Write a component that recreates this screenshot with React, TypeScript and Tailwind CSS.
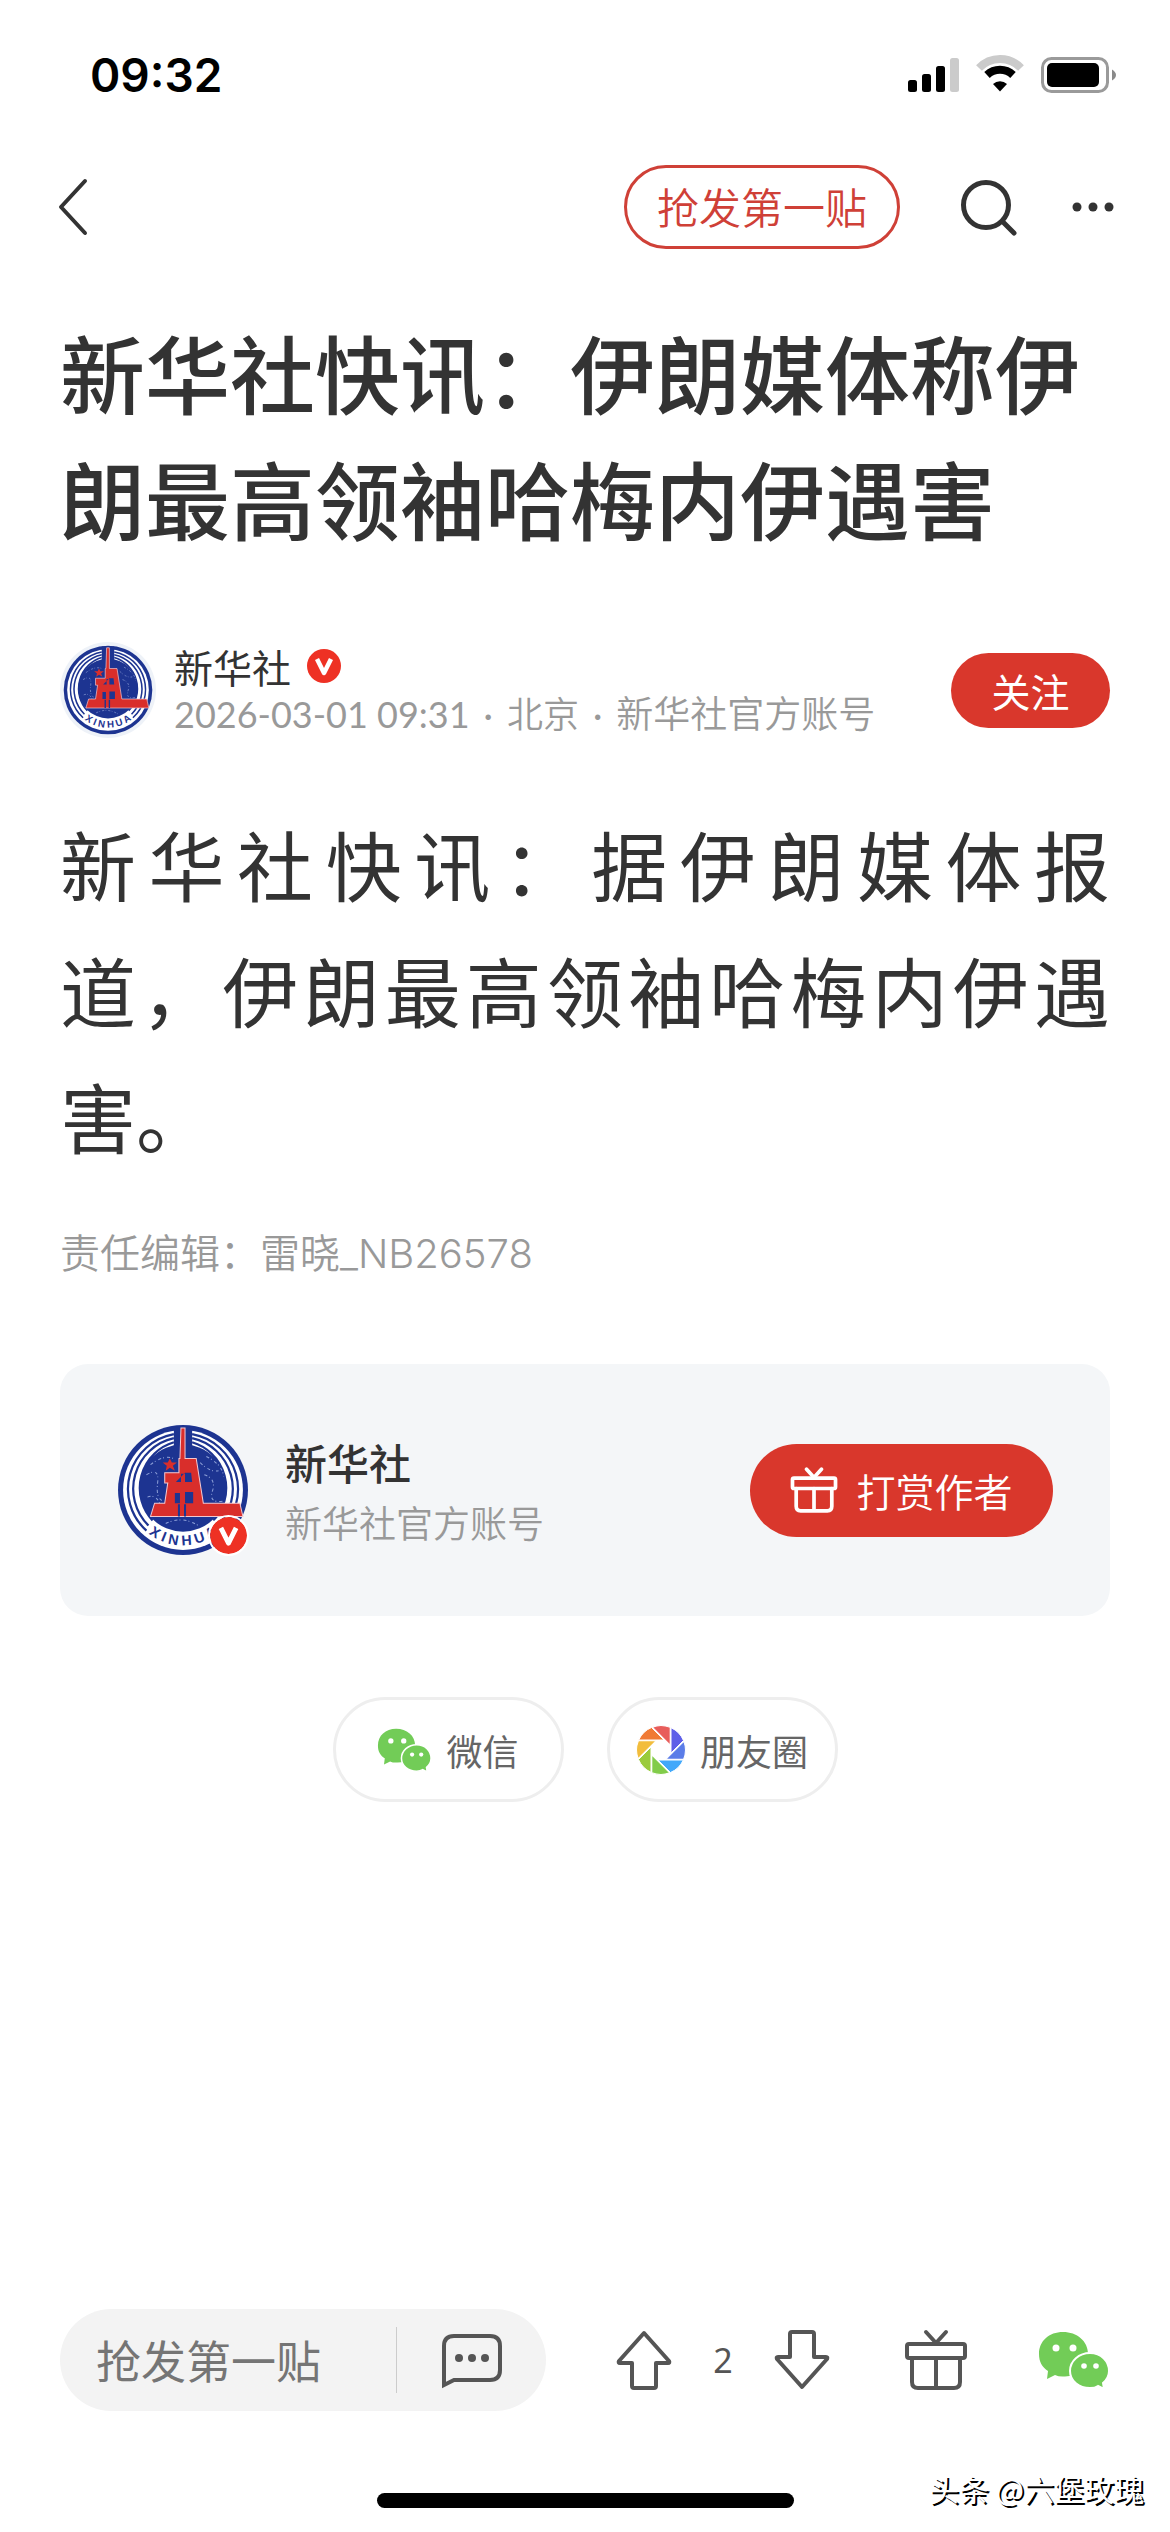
import type { ReactNode } from 'react';

const blades = ['#f07a35', '#e85d5b', '#5f5fe8', '#5b7de8', '#42a8fa', '#82cc4a', '#9bcb3c', '#f2bd3c'];

function StatusIcons() {
  return (
    <svg className="h-[40px] w-[210px]" viewBox="0 0 210 40" aria-hidden="true">
      <rect x="2" y="25" width="9" height="12" rx="2.5" />
      <rect x="16" y="19" width="9" height="18" rx="2.5" />
      <rect x="30" y="11" width="9" height="26" rx="2.5" />
      <rect x="44" y="3" width="9" height="34" rx="2.5" fill="#cbcbcb" />
      <path d="M73 13A29 29 0 0 1 115 13" fill="none" stroke="#cbcbcb" strokeWidth="8" />
      <path d="M81 20A19 19 0 0 1 107 20" fill="none" stroke="#000" strokeWidth="8" />
      <path d="M87 29A10.500 10.500 0 0 1 101 29L94 36.500Z" />
      <rect x="136.500" y="3.500" width="65" height="33" rx="9" fill="none" stroke="#9a9a9a" strokeWidth="3" />
      <rect x="141" y="8" width="52" height="24" rx="5" />
      <path d="M206 14.500Q210 17 210 20T206 25.500Z" fill="#8a8a8a" />
    </svg>
  );
}

function XinhuaLogo({ className, idPrefix }: { className: string; idPrefix: string }) {
  const arc = `${idPrefix}-arc`;
  return (
    <svg className={className} viewBox="0 0 130 130" role="img" aria-label="新华社">
      <circle cx="65" cy="65" r="64" fill="#1d3491" />
      <circle cx="65" cy="65" r="59" fill="#fff" />
      <g fill="none" stroke="#1d3491" strokeWidth="2.200">
        <path d="M29 105A55 55 0 0 1 56 10M74 10A55 55 0 0 1 101 105" />
        <path d="M31 100A51 51 0 0 1 56 14M74 14A51 51 0 0 1 99 100" />
        <path d="M35 95A47 47 0 0 1 56 18M74 18A47 47 0 0 1 95 95" />
      </g>
      <path d="M56 2H74V24H56Z" fill="#1d3491" />
      <circle cx="65" cy="63" r="43" fill="#1d3491" />
      <g fill="none" stroke="#8ea0d8" strokeWidth="1" strokeDasharray="3 2 1 3">
        <path d="M29 50Q42 42 40 58T46 76M33 40Q46 30 56 34M88 32Q104 40 105 52M86 50Q98 54 94 66T104 76" />
        <path d="M48 98Q64 90 80 100M82 38Q92 48 100 46M30 72Q40 68 44 84" />
      </g>
      <path
        d="M63 4H67V34H78L85 78H121L124 91H33L37 78H47L50 58H47V48H61V34H62Z"
        fill="#d92e2b"
        stroke="#f3c7cf"
        strokeWidth="1"
      />
      <path d="M52 34L54 38H59L55 41L57 46L52 43L48 46L49 41L45 38H50Z" fill="#d92e2b" />
      <path d="M58 57H63V49H67V57H74L73 48H67M57 68H62V78H57ZM67 67H75V78H67ZM60 79H62V91H60ZM66 79H68V91H66Z" fill="#1d3491" />
      <path id={arc} d="M23 100A55 55 0 0 0 107 100" fill="none" />
      <text className="font-['Liberation_Sans'] font-bold" fontSize="14" fill="#1d3491" textAnchor="middle">
        <textPath href={`#${arc}`} startOffset="50%">X I N H U A</textPath>
      </text>
    </svg>
  );
}

function VerifiedBadge({ className }: { className: string }) {
  return (
    <svg className={className} viewBox="0 0 34 34" aria-hidden="true">
      <circle cx="17" cy="17" r="17" fill="#ee3124" />
      <path d="M10 10L17 24L24 10" fill="none" stroke="#fff" strokeWidth="4.500" strokeLinejoin="round" />
    </svg>
  );
}

function GiftIcon({ className, strokeWidth }: { className: string; strokeWidth: number }) {
  return (
    <svg
      className={className}
      viewBox="0 0 64 62"
      fill="none"
      stroke="currentColor"
      strokeWidth={strokeWidth}
      strokeLinecap="round"
      strokeLinejoin="round"
      aria-hidden="true"
    >
      <rect x="3" y="15" width="58" height="14" rx="2" />
      <path d="M8 29V53Q8 59 14 59H50Q56 59 56 53V29M32 29V59M22 3L32 14L42 3" />
    </svg>
  );
}

function WechatIcon({ className }: { className: string }) {
  return (
    <svg className={className} viewBox="0 0 72 58" aria-hidden="true">
      <path d="M25 1C11 1 1 10 1 23C1 31 4 36 10 40L9 48L17 44Q21 46 27 45.500C40 45 50 36 50 23C50 10 39 1 25 1Z" fill="#72cc57" />
      <path
        d="M52 22C41 22 32 30 32 40C32 50 41 57 52 57Q57 57 60 55L66 58L65 52Q71 47 71 40C71 30 63 22 52 22Z"
        fill="#72cc57"
        stroke="#fff"
        strokeWidth="2"
      />
      <g fill="#fff">
        <circle cx="18" cy="17" r="3.500" />
        <circle cx="35" cy="17" r="3.500" />
        <circle cx="46" cy="35" r="2.800" />
        <circle cx="58" cy="35" r="2.800" />
      </g>
    </svg>
  );
}

function MomentsIcon() {
  return (
    <svg className="size-[50px]" viewBox="-25 -25 50 50" aria-hidden="true">
      {blades.map((color, i) => (
        <path
          key={color}
          d="M-22.300 -10A24.500 24.500 0 0 1 -9.500 -22.500L3 -10Z"
          transform={`rotate(${i * 45})`}
          fill={color}
          stroke="#fff"
          strokeWidth="1"
        />
      ))}
      <circle r="9.500" fill="#fff" />
    </svg>
  );
}

function VoteArrow({ className }: { className: string }) {
  return (
    <svg className={className} viewBox="0 0 56 60" fill="none" stroke="currentColor" strokeWidth="4" strokeLinejoin="round" aria-hidden="true">
      <path d="M28 3L53 31Q54 33 52 33H40V56Q40 58 38 58H18Q16 58 16 56V33H4Q2 33 3 31Z" />
    </svg>
  );
}

function ShareButton({ icon, label }: { icon: ReactNode; label: string }) {
  return (
    <button className="flex h-[105px] w-[231px] items-center justify-center gap-[14px] rounded-full border-3 border-[#eeeeee] text-[36px] text-[#666666]">
      {icon}
      {label}
    </button>
  );
}

export default function App() {
  return (
    <div className="relative flex min-h-screen flex-col bg-white font-['Noto_Sans_CJK_SC',sans-serif] text-[#333333]">
      {/* Status bar */}
      <div className="flex h-[150px] items-center justify-between pr-[54px] pl-[90px]">
        <span className="font-['Inter'] text-[46px] font-semibold text-black">09:32</span>
        <StatusIcons />
      </div>

      {/* Navigation */}
      <header className="flex h-[114px] items-center px-[54px]">
        <button aria-label="返回">
          <svg className="h-[60px] w-[36px]" viewBox="0 0 36 60" fill="none" stroke="currentColor" strokeWidth="4" strokeLinecap="round" strokeLinejoin="round">
            <path d="M31 4L7 30L31 56" />
          </svg>
        </button>
        <button className="ml-auto h-[84px] rounded-full border-3 border-[#cf4037] px-[30px] pb-1 text-[42px] font-[350] text-[#cf4037]">
          抢发第一贴
        </button>
        <button className="ml-[60px]" aria-label="搜索">
          <svg className="size-[58px]" viewBox="0 0 58 58" fill="none" stroke="currentColor" strokeWidth="5" strokeLinecap="round">
            <circle cx="26" cy="27" r="22.500" />
            <path d="M43 44L54 55" />
          </svg>
        </button>
        <button className="ml-[52px]" aria-label="更多">
          <svg className="h-[12px] w-[46px]" viewBox="0 0 46 12" fill="currentColor">
            <circle cx="7" cy="6" r="4.500" />
            <circle cx="23" cy="6" r="4.500" />
            <circle cx="39" cy="6" r="4.500" />
          </svg>
        </button>
      </header>

      <main className="px-[60px] pt-[44px]">
        <h1 className="text-[85px] leading-[126px] font-medium">新华社快讯：伊朗媒体称伊朗最高领袖哈梅内伊遇害</h1>

        {/* Author */}
        <div className="mt-[82px] flex h-[96px] items-center">
          <span className="rounded-full bg-[#eef2f8] p-[3px]">
            <XinhuaLogo className="size-[90px]" idPrefix="author" />
          </span>
          <div className="ml-[18px]">
            <div className="flex items-center gap-4 text-[39px] leading-[48px]">
              新华社
              <VerifiedBadge className="size-[34px]" />
            </div>
            <p className="flex gap-[14px] font-['Lato','Noto_Sans_CJK_SC',sans-serif] text-[36px] leading-[48px] text-[#999999]">
              <span>2026-03-01 09:31</span>
              <span>·</span>
              <span className="font-[350]">北京</span>
              <span>·</span>
              <span className="text-[37px] font-[350]">新华社官方账号</span>
            </p>
          </div>
          <button className="ml-auto h-[75px] w-[159px] rounded-full bg-[#d9372c] text-[39px] text-white">关注</button>
        </div>

        <p className="mt-[62px] text-justify text-[76px] leading-[126px]">新华社快讯：据伊朗媒体报道，伊朗最高领袖哈梅内伊遇害。</p>

        <p className="mt-[46px] font-['Inter','Noto_Sans_CJK_SC',sans-serif] text-[40px] leading-[60px] font-[350] text-[#999999]">
          责任编辑：雷晓_NB26578
        </p>

        {/* Reward card */}
        <section className="mt-[80px] flex h-[252px] items-center rounded-[28px] bg-[#f4f6f8] px-[57px]">
          <div className="relative">
            <XinhuaLogo className="size-[132px]" idPrefix="card" />
            <VerifiedBadge className="absolute right-0 bottom-0 size-[41px] rounded-full border-2 border-white" />
          </div>
          <div className="ml-[36px] pt-1">
            <h2 className="text-[42px] leading-[60px] font-medium">新华社</h2>
            <p className="text-[37px] leading-[60px] font-[350] text-[#999999]">新华社官方账号</p>
          </div>
          <button className="ml-auto flex h-[93px] w-[303px] items-center justify-center gap-[18px] rounded-full bg-[#d9372c] text-[39px] font-[350] text-white">
            <GiftIcon className="h-[46px] w-[48px]" strokeWidth={5} />
            打赏作者
          </button>
        </section>

        {/* Share */}
        <div className="mt-[81px] flex justify-center gap-[43px]">
          <ShareButton icon={<WechatIcon className="h-[44px] w-[55px]" />} label="微信" />
          <ShareButton icon={<MomentsIcon />} label="朋友圈" />
        </div>
      </main>

      {/* Bottom toolbar */}
      <footer className="mt-auto px-[60px] pb-[24px]">
        <div className="flex items-center justify-between text-[#555555]">
          <div className="flex h-[102px] w-[486px] items-center rounded-full bg-[#f3f3f3] pr-[42px] pl-[36px]">
            <input
              className="min-w-0 flex-1 bg-transparent text-[45px] outline-none placeholder:text-[#757575]"
              placeholder="抢发第一贴"
              aria-label="发表评论"
            />
            <span className="h-[66px] w-px bg-[#cccccc]" />
            <button className="ml-[43px]" aria-label="查看评论">
              <svg className="h-[60px] w-[64px]" viewBox="0 0 64 60" fill="none" stroke="currentColor" strokeWidth="4">
                <path d="M4 55V16Q4 6 14 6H50Q60 6 60 16V40Q60 50 50 50H14Z" />
                <g fill="currentColor" stroke="none">
                  <circle cx="19" cy="28" r="4" />
                  <circle cx="32" cy="28" r="4" />
                  <circle cx="45" cy="28" r="4" />
                </g>
              </svg>
            </button>
          </div>
          <div className="flex items-center gap-[41px]">
            <button aria-label="赞成">
              <VoteArrow className="h-[60px] w-[56px]" />
            </button>
            <span className="font-['Noto_Sans'] text-[34px]">2</span>
            <button aria-label="反对">
              <VoteArrow className="h-[60px] w-[56px] rotate-180" />
            </button>
          </div>
          <button className="pl-1" aria-label="打赏">
            <GiftIcon className="h-[62px] w-[64px]" strokeWidth={4} />
          </button>
          <button aria-label="分享到微信">
            <WechatIcon className="h-[58px] w-[72px]" />
          </button>
        </div>
        <div className="mx-auto mt-[82px] h-[15px] w-[417px] rounded-full bg-black" />
      </footer>

      <span className="absolute right-[26px] bottom-[24px] text-[30px] leading-[40px] text-white [text-shadow:2px_2px_0_#000]">
        头条 @六堡玫瑰
      </span>
    </div>
  );
}
